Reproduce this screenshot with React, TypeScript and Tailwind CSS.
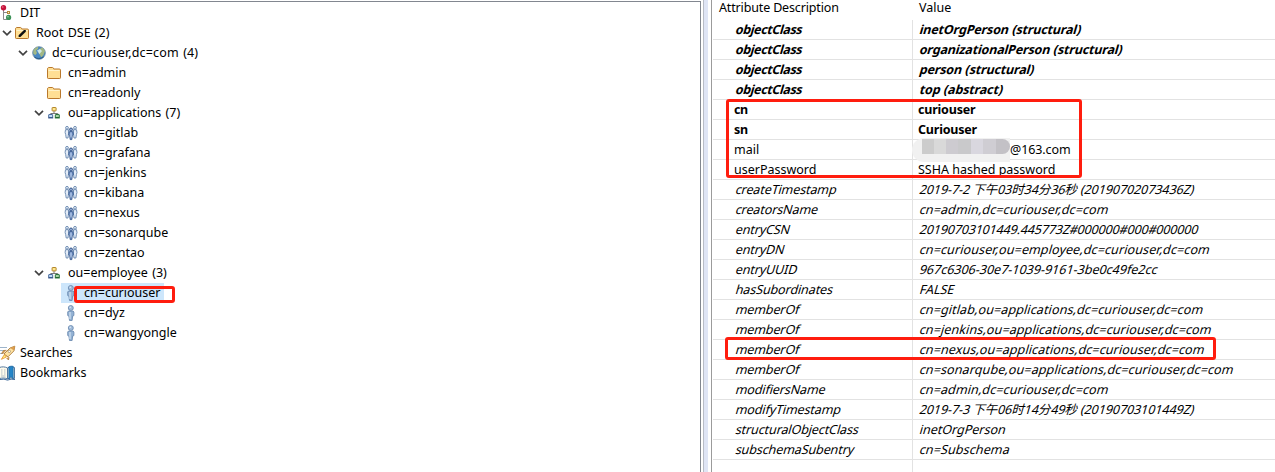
import React from "react";

type IconKind = "dit" | "root" | "globe" | "folder" | "org" | "group" | "person" | "search" | "bookmark";

function Icon({ kind }: { kind: IconKind }) {
  return (
    <svg width="16" height="16" viewBox="0 0 16 16" fill="none" className="block shrink-0 overflow-visible">
      {kind === "dit" && (
        <>
          <path d="M3.5 5v9.5H7M3.5 7.5H7" stroke="#8a8a8a" />
          <circle cx="3.5" cy="2.8" r="2.7" fill="#c4143c" />
          <circle cx="2.8" cy="2" r="0.8" fill="#f07890" />
          <rect x="7.5" y="6.5" width="2" height="2" fill="#fff4c8" stroke="#b58a3c" />
          <circle cx="8.6" cy="12.4" r="2.6" fill="#3c9258" />
          <circle cx="8" cy="11.7" r="0.8" fill="#9bd0a8" />
        </>
      )}
      {(kind === "folder" || kind === "root") && (
        <>
          <path d="M1.5 4.2c0-1 .4-1.7 1.2-1.7h3.6c.8 0 1.1.4 1.4 1.5h5.6c.8 0 1.2.4 1.2 1.1v7.7c0 .5-.3.7-.8.7H2.3c-.5 0-.8-.2-.8-.7z" fill="#ffdf94" stroke="#b9782c" />
          <path d="M2.5 5.5h11" stroke="#fff2c8" />
          {kind === "root" && <path d="M4.6 12V10.2L10 5h1.8v1.8L6.4 12z" fill="#101010" />}
        </>
      )}
      {kind === "globe" && (
        <>
          <circle cx="9" cy="8" r="6.3" fill="#4a88c2" stroke="#61839d" strokeWidth=".8" />
          <path d="M3.2 6c1-2.5 3-4 5-4.2L8 4 6 5.5 7 8 5.5 10 3.4 9zM9.5 4l3-1.5L15 6l-1.5 4-2.2 2.5L10 10 8.5 8z" fill="#a3b884" />
          <path d="M7 5.5 10 4l2 2-2.5 3z" fill="#d8f1f5" opacity=".85" />
          <path d="M4.5 12q4 3.2 9-.2" stroke="#295888" />
        </>
      )}
      {kind === "org" && (
        <g transform="translate(1.2 0)">
          <path d="M6.8 6v3M3.5 10.5v-2h7v2" stroke="#777" />
          <rect x="4.9" y="2.5" width="4" height="3.4" rx=".4" fill="#ffe78d" stroke="#b2862c" />
          <rect x="1.5" y="9.5" width="4" height="3" rx=".4" fill="#c2dcf7" stroke="#47699b" />
          <rect x="8.1" y="9.5" width="4" height="3" rx=".4" fill="#a9d3a7" stroke="#28733c" />
          <path d="M1 12.8h5" stroke="#35558a" strokeWidth="1.3" />
          <path d="M7.6 12.8h5" stroke="#20672e" strokeWidth="1.3" />
        </g>
      )}
      {kind === "group" && (
        <>
          <g fill="#e5edf8" stroke="#6484ad" strokeWidth=".9">
            <circle cx="4" cy="2.8" r="1.4" />
            <path d="M2.5 4.7h3v4L5 13H3.2l-.5-3.5-.6-2z" />
            <circle cx="12" cy="2.8" r="1.4" />
            <path d="M10.5 4.7h3l.5 2.8-.6 2-.5 3.5H11l-.5-4z" />
          </g>
          <circle cx="8" cy="4.5" r="1.5" fill="#8ca7d1" stroke="#36578c" />
          <path d="M6.4 6.6h3.2l.7 3-1 .8-.5 4.2H7.2l-.5-4.2-1-.8z" fill="#7898ca" stroke="#36578c" strokeWidth=".9" />
          <path d="M8 7.5v5" stroke="#c5d7f1" />
        </>
      )}
      {kind === "person" && (
        <>
          <path d="M5.5 6h4.6l.8 1v3.5l-1.2.5-.6 4.5H6.5L5.9 11l-1.2-.5V7z" fill="#94b2d4" stroke="#6585ac" strokeWidth=".8" />
          <path d="M7 7v7" stroke="#d9e7f5" strokeWidth="1.1" />
          <circle cx="7.8" cy="3" r="2.5" fill="#a2bddb" stroke="#6585ac" strokeWidth=".8" />
          <circle cx="7.2" cy="2.3" r=".8" fill="#deebf7" />
        </>
      )}
      {kind === "search" && (
        <>
          <path d="M0 2.5h7M0 5.5h5M0 8.5h3" stroke="#9db4ca" />
          <path d="m4 9 6-6 4.8-1.8-.8 4.6-6 6z" fill="#ffe4a3" stroke="#b3864a" />
          <path d="m10.3 3 4.4-1.8-.8 4.4z" fill="#de9d4c" />
          <path d="m4 8-2.5.5 2-3 3-.2M9 12l-.5 3-2-2" fill="#d7a35d" stroke="#a97637" strokeWidth=".7" />
          <path d="m4.4 9.5-3 4.8 5-2.3z" fill="#fff37a" stroke="#e48d2e" strokeWidth=".8" />
          <circle cx="9.3" cy="6.4" r="1.2" fill="#fff" stroke="#9c8359" strokeWidth=".7" />
        </>
      )}
      {kind === "bookmark" && (
        <>
          <path d="M-.5 2.5c2.5-1 5.5-.8 8 .5v11c-2-1.2-5-1.2-8-.5zM7.5 3c2-1.3 4.5-1.5 7-.5v11c-2.5-.7-5-.7-7 .5z" fill="#fffbec" stroke="#557aa1" />
          <path d="M1 5h1.5M4 5h1.5M1 7h1.5M4 7h1.5M1 9h1.5M4 9h1.5M1 11h4.5" stroke="#9dadbd" strokeWidth=".8" />
          <path d="M8.8 1.8c1.5-.7 3-.8 4.4-.4V14L11 11.7 8.8 14z" fill="#2485c8" stroke="#19639d" strokeWidth=".7" />
          <path d="M0 14.5q4-1 7.5.6 3.5-1.6 7.5-.6" stroke="#3b6798" />
        </>
      )}
    </svg>
  );
}

function Chevron() {
  return (
    <svg width="10" height="6" viewBox="0 0 10 6" fill="none" className="block">
      <path d="m1 .8 4 4 4-4" stroke="#424242" strokeWidth="1.7" />
    </svg>
  );
}

type TreeItem = { label: string; icon: IconKind; pad: string; open?: boolean; selected?: boolean };

const LEVEL = {
  base: "pl-0",
  root: "pl-[2px]",
  domain: "pl-[18px]",
  unit: "pl-[34px]",
  leaf: "pl-[46px]",
  member: "pl-[63px]",
};

const tree: TreeItem[] = [
  { label: "DIT", icon: "dit", pad: LEVEL.base },
  { label: "Root DSE (2)", icon: "root", pad: LEVEL.root, open: true },
  { label: "dc=curiouser,dc=com (4)", icon: "globe", pad: LEVEL.domain, open: true },
  { label: "cn=admin", icon: "folder", pad: LEVEL.leaf },
  { label: "cn=readonly", icon: "folder", pad: LEVEL.leaf },
  { label: "ou=applications (7)", icon: "org", pad: LEVEL.unit, open: true },
  ...["gitlab", "grafana", "jenkins", "kibana", "nexus", "sonarqube", "zentao"].map(
    (n): TreeItem => ({ label: "cn=" + n, icon: "group", pad: LEVEL.member })
  ),
  { label: "ou=employee (3)", icon: "org", pad: LEVEL.unit, open: true },
  { label: "cn=curiouser", icon: "person", pad: LEVEL.member, selected: true },
  { label: "cn=dyz", icon: "person", pad: LEVEL.member },
  { label: "cn=wangyongle", icon: "person", pad: LEVEL.member },
  { label: "Searches", icon: "search", pad: LEVEL.base },
  { label: "Bookmarks", icon: "bookmark", pad: LEVEL.base },
];

function TreeRow({ item }: { item: TreeItem }) {
  return (
    <div className={`flex h-5 items-center ${item.pad}`}>
      {item.open && <span className="mr-[2px] w-[10px]"><Chevron /></span>}
      <span className={`flex h-5 items-center ${item.selected ? "-ml-[2px] bg-[#cde6fb] pr-1 pl-[2px]" : ""}`}>
        <Icon kind={item.icon} />
        <span className={`leading-5 [word-spacing:1px] ${item.icon === "globe" ? "tracking-[0.15px]" : ""} ${item.icon === "folder" || item.open ? "ml-[6px]" : item.icon === "group" || item.icon === "person" ? "ml-[5px]" : "ml-1"}`}>
          {item.label}
        </span>
      </span>
    </div>
  );
}

type Weight = "required" | "bold" | "plain" | "operational";
const attributes: [string, string, Weight][] = [
  ["objectClass", "inetOrgPerson (structural)", "required"],
  ["objectClass", "organizationalPerson (structural)", "required"],
  ["objectClass", "person (structural)", "required"],
  ["objectClass", "top (abstract)", "required"],
  ["cn", "curiouser", "bold"],
  ["sn", "Curiouser", "bold"],
  ["mail", "@163.com", "plain"],
  ["userPassword", "SSHA hashed password", "plain"],
  ["createTimestamp", "2019-7-2 下午03时34分36秒 (20190702073436Z)", "operational"],
  ["creatorsName", "cn=admin,dc=curiouser,dc=com", "operational"],
  ["entryCSN", "20190703101449.445773Z#000000#000#000000", "operational"],
  ["entryDN", "cn=curiouser,ou=employee,dc=curiouser,dc=com", "operational"],
  ["entryUUID", "967c6306-30e7-1039-9161-3be0c49fe2cc", "operational"],
  ["hasSubordinates", "FALSE", "operational"],
  ["memberOf", "cn=gitlab,ou=applications,dc=curiouser,dc=com", "operational"],
  ["memberOf", "cn=jenkins,ou=applications,dc=curiouser,dc=com", "operational"],
  ["memberOf", "cn=nexus,ou=applications,dc=curiouser,dc=com", "operational"],
  ["memberOf", "cn=sonarqube,ou=applications,dc=curiouser,dc=com", "operational"],
  ["modifiersName", "cn=admin,dc=curiouser,dc=com", "operational"],
  ["modifyTimestamp", "2019-7-3 下午06时14分49秒 (20190703101449Z)", "operational"],
  ["structuralObjectClass", "inetOrgPerson", "operational"],
  ["subschemaSubentry", "cn=Subschema", "operational"],
];

const textStyle: Record<Weight, string> = {
  required: "ml-[1.5px] inline-block -skew-x-[16deg] font-bold",
  bold: "inline-block font-bold",
  plain: "inline-block",
  operational: "ml-[1.5px] inline-block -skew-x-[16deg]",
};

function nameTracking(weight: Weight) {
  if (weight === "plain") return "";
  return weight === "operational" ? "tracking-[-0.1px]" : "tracking-[-0.37px]";
}

function valueTracking(value: string, weight: Weight) {
  if (weight === "required") return "tracking-[-0.15px] [word-spacing:0.5px]";
  if (weight === "bold") return "tracking-[-0.2px]";
  if (weight === "plain") return "";
  if (value.startsWith("2019-")) return "tracking-[-0.08px]";
  if (value.startsWith("2019")) return "tracking-[-0.16px]";
  return value.startsWith("cn=") ? "tracking-[0.12px]" : "";
}

function MaskedName() {
  return (
    <div className="absolute top-[138px] left-[912px] h-[24px] w-[98px] rounded-l-full rounded-tr-[40px] rounded-br-[60px] bg-[#f1f1f1]">
      <div className="mt-px ml-[10px] flex h-[15px] overflow-hidden rounded-r-lg">
        <span className="w-[12px] bg-[#cccccc]" />
        <span className="w-[12px] bg-[#d9d9d9]" />
        <span className="w-[12px] bg-[#cdcbd0]" />
        <span className="w-[13px] bg-[#c9c9cb]" />
        <span className="w-[12px] bg-[#d9d7df]" />
        <span className="w-[13px] bg-[#cfcdd3]" />
        <span className="grow bg-[#c3c1c6]" />
      </div>
    </div>
  );
}

export default function App() {
  return (
    <main className="relative flex h-[472px] w-[1275px] overflow-hidden bg-white font-['Noto_Sans','Noto_Sans_CJK_SC',sans-serif] text-[12.5px] whitespace-nowrap text-black">
      <section className="mt-px h-[471px] w-[701px] shrink-0 border-t border-r border-[#828790] pt-px">
        {tree.map((item, i) => <TreeRow key={i} item={item} />)}
      </section>
      <div className="ml-[2px] w-px bg-[#b8bcc6]" />
      <div className="w-1 bg-[#dfe5f5]" />
      <section className="ml-[3px] grow border-l border-[#9b9b9b] pl-px">
        <div className="flex h-5">
          <span className="w-[200px] pl-[6px] leading-[16px] tracking-[-0.15px]">Attribute Description</span>
          <span className="pl-[6px] leading-[16px]">Value</span>
        </div>
        {attributes.map(([name, value, weight], i) => (
          <div key={i} className="flex h-5 border-b border-[#e2e2e2] leading-[19px]">
            <span className="w-[200px] border-r border-[#e2e2e2] pl-[21px]">
              <span className={`${textStyle[weight]} ${nameTracking(weight)}`}>{name}</span>
            </span>
            {name === "mail" ? (
              <span className="pl-[97px] tracking-[-0.1px]">{value}</span>
            ) : (
              <span className="pl-[5px]">
                <span className={`${textStyle[weight]} ${valueTracking(value, weight)}`}>{value}</span>
              </span>
            )}
          </div>
        ))}
        <div className="h-3 w-[200px] border-r border-[#e2e2e2]" />
      </section>
      <MaskedName />
      <div className="absolute top-[286px] left-[74px] h-[17px] w-[101px] rounded-[3px] border-3 border-[#ff1d0e]" />
      <div className="absolute top-[99px] left-[726px] h-[79px] w-[356px] rounded-[3px] border-3 border-[#ff1d0e]" />
      <div className="absolute top-[337px] left-[725px] h-[23px] w-[491px] rounded-[3px] border-3 border-[#ff1d0e]" />
    </main>
  );
}
